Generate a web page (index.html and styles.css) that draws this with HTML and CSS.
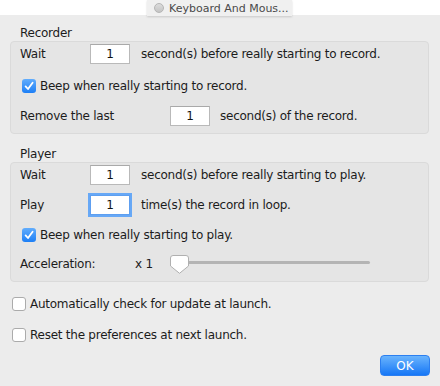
FILE: index.html
```html
<!DOCTYPE html>
<html lang="en">
<head>
    <meta charset="UTF-8">
    <title>Keyboard And Mouse Recorder - Preferences</title>
    <link rel="stylesheet" href="styles.css">
</head>
<body>
    <div class="titlebar">
        <div class="tab"><span class="dot"></span>Keyboard And Mous...</div>
    </div>

    <div class="window">
        <div class="group-title">Recorder</div>
        <div class="group">
            <div class="row">
                <span class="label">Wait</span>
                <input type="text" class="num" value="1">
                <span class="after">second(s) before really starting to record.</span>
            </div>
            <label class="row check-row gap-12">
                <span class="check checked">
                    <svg width="14" height="14" viewBox="0 0 14 14"><path d="M3.6 7.4 L6 10 L10.6 3.8" fill="none" stroke="#fff" stroke-width="1.8" stroke-linecap="round" stroke-linejoin="round"/></svg>
                </span>
                Beep when really starting to record.
            </label>
            <div class="row gap-10">
                <span class="label wide">Remove the last</span>
                <input type="text" class="num" value="1">
                <span class="after short">second(s) of the record.</span>
            </div>
        </div>

        <div class="group-title second">Player</div>
        <div class="group">
            <div class="row">
                <span class="label">Wait</span>
                <input type="text" class="num" value="1">
                <span class="after">second(s) before really starting to play.</span>
            </div>
            <div class="row gap-10">
                <span class="label">Play</span>
                <input type="text" class="num focused" value="1">
                <span class="after">time(s) the record in loop.</span>
            </div>
            <label class="row check-row gap-10">
                <span class="check checked">
                    <svg width="14" height="14" viewBox="0 0 14 14"><path d="M3.6 7.4 L6 10 L10.6 3.8" fill="none" stroke="#fff" stroke-width="1.8" stroke-linecap="round" stroke-linejoin="round"/></svg>
                </span>
                Beep when really starting to play.
            </label>
            <div class="row gap-9">
                <span class="label accel">Acceleration:</span>
                <span class="factor">x 1</span>
                <div class="slider">
                    <div class="track"></div>
                    <svg class="knob" width="19" height="19" viewBox="0 0 19 19"><path d="M3 0.5 H16 a2.5 2.5 0 0 1 2.5 2.5 V11 L9.5 18.3 L0.5 11 V3 a2.5 2.5 0 0 1 2.5 -2.5 Z" fill="#fff" stroke="#b0b0b0"/></svg>
                </div>
            </div>
        </div>

        <label class="row check-row outer gap-12">
            <span class="check"></span>
            Automatically check for update at launch.
        </label>
        <label class="row check-row outer gap-11">
            <span class="check"></span>
            Reset the preferences at next launch.
        </label>

        <div class="actions">
            <button class="btn">OK</button>
        </div>
    </div>
</body>
</html>
```

FILE: styles.css
```css
body {
    margin: 0;
    background: #ececec;
    font-family: "DejaVu Sans", sans-serif;
    font-size: 12px;
    letter-spacing: -0.25px;
    color: #1c1c1c;
}
.titlebar {
    height: 15px;
    background: #fff;
    display: flex;
    justify-content: center;
}
.tab {
    width: 145px;
    height: 16px;
    margin-left: -1px;
    background: #f0f0f0;
    box-shadow: 0 1px 2px rgba(0, 0, 0, 0.15);
    display: flex;
    align-items: center;
    font-size: 11px;
    letter-spacing: 0;
    color: #4a4a4a;
    box-sizing: border-box;
    padding-left: 7px;
}
.dot {
    width: 10px;
    height: 10px;
    border-radius: 50%;
    background: linear-gradient(#dcdcdc, #c4c4c4);
    border: 1px solid #b5b5b5;
    box-sizing: border-box;
    margin-right: 5px;
}
.window {
    padding: 0 11px 0 10px;
}
.group-title {
    margin: 11px 0 0 10px;
    line-height: 15px;
}
.group-title.second {
    margin-top: 13px;
}
.group {
    border: 1px solid #dadada;
    background: #e5e5e5;
    border-radius: 4px;
    padding: 2px 9px 7px;
}
.row {
    display: flex;
    align-items: center;
    height: 20px;
}
.gap-9 { margin-top: 9px; }
.gap-10 { margin-top: 10px; }
.gap-11 { margin-top: 11px; }
.gap-12 { margin-top: 12px; }
.label {
    width: 70px;
}
.label.wide {
    width: 150px;
}
.label.accel {
    width: 115px;
}
.factor {
    width: 35px;
}
.num {
    width: 40px;
    height: 20px;
    box-sizing: border-box;
    border: 1px solid #b9b9b9;
    border-top-color: #a9a9a9;
    background: #fff;
    padding: 0;
    text-align: center;
    font-family: inherit;
    font-size: 12px;
    color: #111;
    outline: none;
}
.num.focused {
    border-color: #5e9ff0;
    box-shadow: 0 0 0 2px #67a8f6;
}
.after {
    margin-left: 11px;
}
.after.short {
    margin-left: 10px;
}
.check-row {
    cursor: default;
}
.check {
    width: 14px;
    height: 14px;
    box-sizing: border-box;
    border-radius: 3px;
    border: 1px solid #ababab;
    background: #fff;
    margin: 0 4px 0 2px;
    display: flex;
}
.check.checked {
    border: none;
    background: linear-gradient(#62adfc, #1d7ff6);
}
.slider {
    position: relative;
    width: 200px;
    height: 20px;
}
.track {
    position: absolute;
    left: 4px;
    right: 0;
    top: 7px;
    height: 3px;
    border-radius: 2px;
    background: #b4b4b4;
}
.knob {
    position: absolute;
    left: 0;
    top: 1px;
}
.outer .check {
    margin-left: 2px;
}
.actions {
    display: flex;
    justify-content: flex-end;
    margin: 10px -1px 0 0;
}
.btn {
    width: 50px;
    height: 21px;
    border: 1px solid #2c7ff0;
    border-radius: 4px;
    background: linear-gradient(#6ab4fd, #1677f6);
    color: #fff;
    font-family: inherit;
    font-size: 12px;
    letter-spacing: 0;
    padding: 0;
}
```
